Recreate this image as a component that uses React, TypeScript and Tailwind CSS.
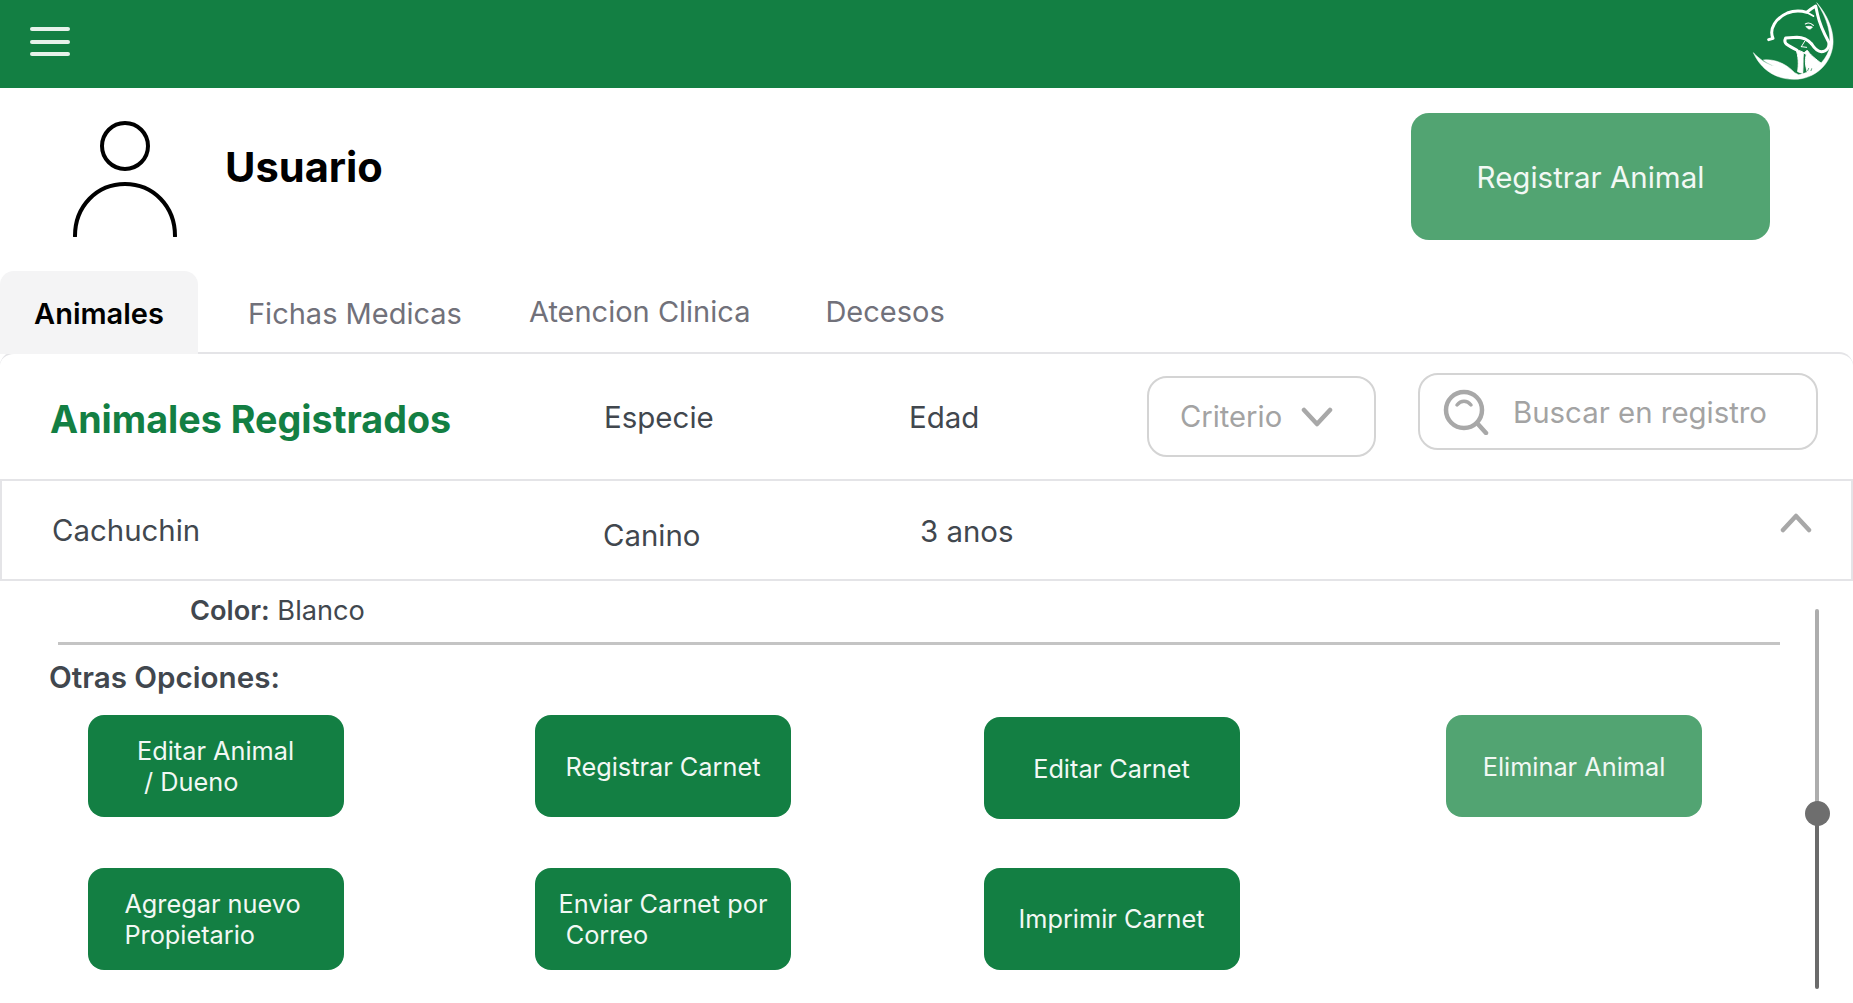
import React from "react";

const font = { fontFamily: "Inter, 'Noto Sans', sans-serif" };

function Logo() {
  return (
    <svg width="103" height="88" viewBox="0 0 309 264" fill="none" stroke="white" strokeLinecap="round" strokeLinejoin="round" className="block">
      {/* outer crescent with hand */}
      <path d="M201 9C232 45 252 90 249 132C244 192 195 238 132 238C78 238 34 210 10 158C30 178 48 192 72 198C58 192 46 186 40 180C72 176 108 190 134 218L146 224C190 216 224 188 237 150C246 105 232 55 201 9Z" fill="white" strokeWidth="1.5" />
      {/* horse */}
      <path d="M56 119L69 115C56 86 78 54 112 39C134 31 152 32 170 37L183 27L197 18L203 45C208 68 222 100 236 126C240 142 229 155 214 155C202 155 192 143 185 132" strokeWidth="9" />
      <path d="M172 38L190 48" strokeWidth="6" />
      <path d="M166 72C174 67 184 70 190 76" strokeWidth="3.5" />
      <path d="M169 80C176 78 182 79 187 81C182 90 174 89 169 80Z" fill="white" strokeWidth="2.5" />
      {/* dog */}
      <path d="M185 132C174 120 158 112 141 112L107 114C103 122 104 128 110 133C120 140 130 145 140 150" strokeWidth="9" />
      <path d="M138 149C146 168 146 195 143 215L158 220C160 200 158 178 160 160C166 156 170 150 173 152C178 162 198 178 214 190C205 200 190 210 172 217C166 196 164 180 169 164L158 156Z" fill="white" strokeWidth="3" />
      <path d="M154 140L164 124M154 140L170 142" strokeWidth="3" />
      <path d="M173 212L176 205M183 212L185 206" stroke="#137f43" strokeWidth="2" />
    </svg>
  );
}

function Person() {
  return (
    <svg width="106" height="116" viewBox="0 0 106 116" fill="none" stroke="black" strokeWidth="4" strokeLinecap="round" className="block">
      <circle cx="53" cy="25" r="23" />
      <path d="M3 115C3 85 25 63 53 63C81 63 103 85 103 115" />
    </svg>
  );
}

function ActionButton({ children, light, mt }: { children: React.ReactNode; light?: boolean; mt?: string }) {
  return (
    <button className={`flex h-[102px] w-[256px] shrink-0 items-center justify-center rounded-[16px] text-[25.3px] leading-[31px] text-[#f2f8f4] ${light ? "bg-[#52a472]" : "bg-[#137f43]"} ${mt ?? ""}`}>
      {children}
    </button>
  );
}

export default function App() {
  return (
    <div className="h-[1003px] w-[1853px] overflow-hidden bg-white" style={font}>
      <header className="flex h-[88px] items-center justify-between bg-[#137f43]">
        <div className="mb-[5px] ml-[30px] flex w-[40px] flex-col gap-[8.5px]">
          <span className="h-[4px] rounded-full bg-[#e7f2eb]" />
          <span className="h-[4px] rounded-full bg-[#e7f2eb]" />
          <span className="h-[4px] rounded-full bg-[#e7f2eb]" />
        </div>
        <Logo />
      </header>

      <section className="flex h-[183px] items-start">
        <div className="ml-[72px] mt-[33px]"><Person /></div>
        <h1 className="ml-[47px] mt-[55px] text-[41.6px] font-bold leading-[48px] text-black">Usuario</h1>
        <button className="ml-auto mr-[83px] mt-[25px] h-[127px] w-[359px] rounded-[18px] bg-[#52a472] pt-[2px] text-[29.5px] text-[#f2f8f4]">Registrar Animal</button>
      </section>

      <nav className="flex h-[83px] items-start text-[29px] leading-[36px] text-[#71717a]">
        <div className="flex h-[83px] w-[198px] items-center justify-center rounded-t-[14px] bg-[#f4f4f5] pt-[3px] font-semibold text-black">Animales</div>
        <span className="ml-[50px] mt-[25px]">Fichas Medicas</span>
        <span className="ml-[67px] mt-[23px]">Atencion Clinica</span>
        <span className="ml-[75px] mt-[23px]">Decesos</span>
      </nav>

      <main className="-mt-[2px] rounded-t-[14px] border-t-2 border-[#e4e4e7]">
        <div className="flex h-[125px] items-start text-[#41474e]">
          <h2 className="ml-[50px] mt-[43px] w-[554px] text-[37.7px] font-bold leading-[44px] text-[#137f43]">Animales Registrados</h2>
          <span className="mt-[45px] w-[305px] text-[29.5px] leading-[36px]">Especie</span>
          <span className="mt-[45px] w-[238px] text-[29.5px] leading-[36px]">Edad</span>
          <div className="mt-[22px] flex h-[81px] w-[229px] items-center rounded-[20px] border-2 border-[#d4d4d4] pl-[31px] text-[29.2px] text-[#a3a3a3]">
            Criterio
            <svg width="32" height="20" viewBox="0 0 32 20" fill="none" stroke="#a8a8a8" strokeWidth="4.5" strokeLinecap="round" strokeLinejoin="round" className="ml-[19px]">
              <path d="M3 3L16 17L29 3" />
            </svg>
          </div>
          <div className="ml-[42px] mt-[19px] flex h-[77px] w-[400px] items-center rounded-[20px] border-2 border-[#d4d4d4] pl-[23px] text-[29.4px] text-[#a3a3a3]">
            <svg width="46" height="46" viewBox="0 0 46 46" fill="none" stroke="#a8a8a8" strokeWidth="4.5" strokeLinecap="round">
              <circle cx="21" cy="21" r="18" />
              <path d="M34 34L43 44" />
              <path d="M14 16C18 11 24 11 28 16" strokeWidth="3.5" />
            </svg>
            <span className="ml-[24px] mt-[3px]">Buscar en registro</span>
          </div>
        </div>

        <div className="flex h-[102px] items-start border-2 border-[#e4e4e7] text-[29.4px] leading-[36px] text-[#41474e]">
          <span className="ml-[50px] mt-[32px] w-[551px]">Cachuchin</span>
          <span className="mt-[37px] w-[317px]">Canino</span>
          <span className="mt-[33px]">3 anos</span>
          <svg width="32" height="20" viewBox="0 0 32 20" fill="none" stroke="#a8a8a8" strokeWidth="4.5" strokeLinecap="round" strokeLinejoin="round" className="ml-auto mr-[39px] mt-[32px]">
            <path d="M3 17L16 3L29 17" />
          </svg>
        </div>

        <div className="flex">
          <div className="w-[1800px]">
            <p className="ml-[190px] mt-[13px] text-[27.2px] leading-[34px] text-[#41474e]"><span className="font-semibold">Color:</span> Blanco</p>
            <div className="ml-[58px] mt-[14px] h-[3px] w-[1722px] bg-[#c4c4c4]" />
            <h3 className="ml-[49px] mt-[14px] text-[29.6px] font-semibold leading-[36px] text-[#41474e]">Otras Opciones:</h3>
            <div className="ml-[87.5px] mt-[20px] flex items-start">
              <ActionButton><span className="text-left">Editar Animal<br />&nbsp;/ Dueno</span></ActionButton>
              <div className="ml-[191.5px]"><ActionButton>Registrar Carnet</ActionButton></div>
              <div className="ml-[192.5px]"><ActionButton mt="mt-[2px]">Editar Carnet</ActionButton></div>
              <div className="ml-[206.5px]"><ActionButton light>Eliminar Animal</ActionButton></div>
            </div>
            <div className="ml-[87.5px] mt-[48.5px] flex items-start">
              <ActionButton><span className="mr-[6px] text-left">Agregar nuevo<br />Propietario</span></ActionButton>
              <div className="ml-[191.5px]"><ActionButton><span className="text-left">Enviar Carnet por<br />&nbsp;Correo</span></ActionButton></div>
              <div className="ml-[192.5px]"><ActionButton>Imprimir Carnet</ActionButton></div>
            </div>
          </div>
          <div className="relative ml-[15px] mt-[28px] h-[380px] w-[4px]">
            <div className="h-[202px] rounded-t-full bg-[#adadad]" />
            <div className="h-[178px] rounded-b-full bg-[#6b6b6b]" />
            <div className="absolute left-[-10.5px] top-[192px] h-[25px] w-[25px] rounded-full bg-[#6e6e6e]" />
          </div>
        </div>
      </main>
    </div>
  );
}
